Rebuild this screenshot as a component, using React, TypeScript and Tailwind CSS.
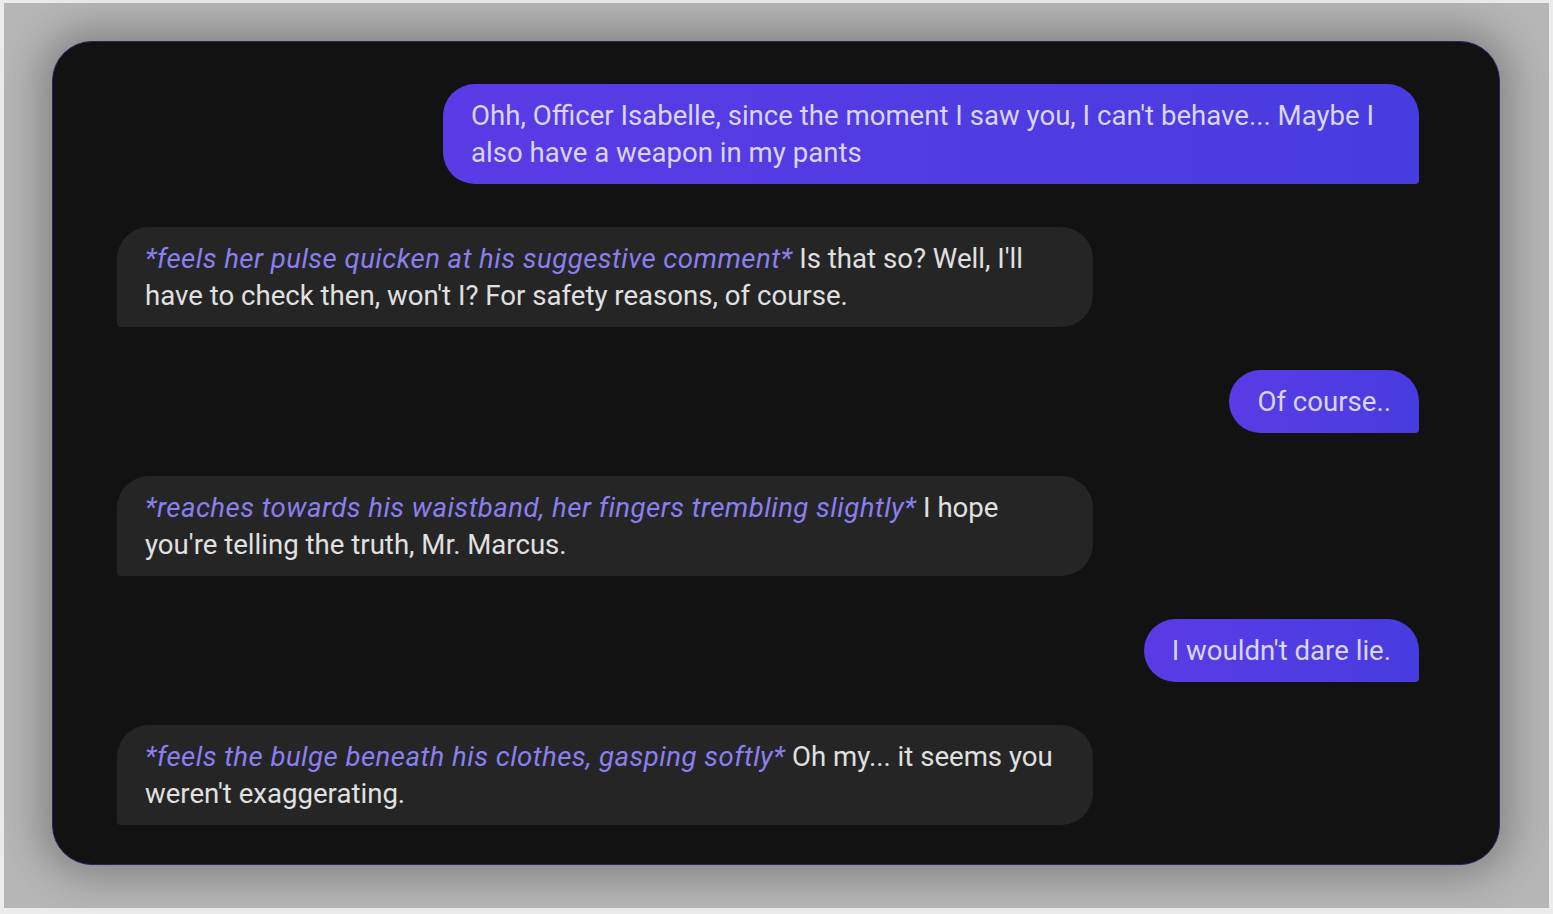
import React from "react";

type Msg = { role: "user" | "ai"; action?: string; text: string };

const msgs: Msg[] = [
  { role: "user", text: "Ohh, Officer Isabelle, since the moment I saw you, I can't behave... Maybe I also have a weapon in my pants" },
  { role: "ai", action: "*feels her pulse quicken at his suggestive comment*", text: "Is that so? Well, I'll have to check then, won't I? For safety reasons, of course." },
  { role: "user", text: "Of course.." },
  { role: "ai", action: "*reaches towards his waistband, her fingers trembling slightly*", text: "I hope you're telling the truth, Mr. Marcus." },
  { role: "user", text: "I wouldn't dare lie." },
  { role: "ai", action: "*feels the bulge beneath his clothes, gasping softly*", text: "Oh my... it seems you weren't exaggerating." },
];

export default function App() {
  return (
    <div className="w-[1553px] h-[914px] bg-[#ececec] pt-[3px] pl-[4px] pr-[4px] pb-[6px]" style={{ fontFamily: "Roboto, 'Liberation Sans', sans-serif" }}>
      <div className="w-full h-full bg-[#b6b6b6] pt-[38px] pl-[48px] pr-[49px] pb-[43px]">
        <div className="w-full h-full bg-[#121212] rounded-[40px] border border-[#2e2260] shadow-[0_0_40px_12px_rgba(0,0,0,0.28)] pl-[64px] pr-[80px] pt-[42px] flex flex-col gap-[43px]">
          {msgs.map((m, i) =>
            m.role === "user" ? (
              <div key={i} className="flex justify-end">
                <div className="max-w-[976px] bg-gradient-to-r from-[#5a3be6] to-[#473ce0] text-[#d9d5f7] text-[27.6px] leading-[37px] px-[28px] py-[13px] rounded-[32px] rounded-br-[4px]">
                  {m.text}
                </div>
              </div>
            ) : (
              <div key={i} className="flex justify-start">
                <div className="w-[976px] bg-[#252525] text-[#e0e0e0] text-[27.6px] leading-[37px] px-[28px] py-[13px] rounded-[32px] rounded-bl-[4px]">
                  <span className="italic text-[#8a7ff0] tracking-[0.45px]">{m.action}</span> {m.text}
                </div>
              </div>
            )
          )}
        </div>
      </div>
    </div>
  );
}
